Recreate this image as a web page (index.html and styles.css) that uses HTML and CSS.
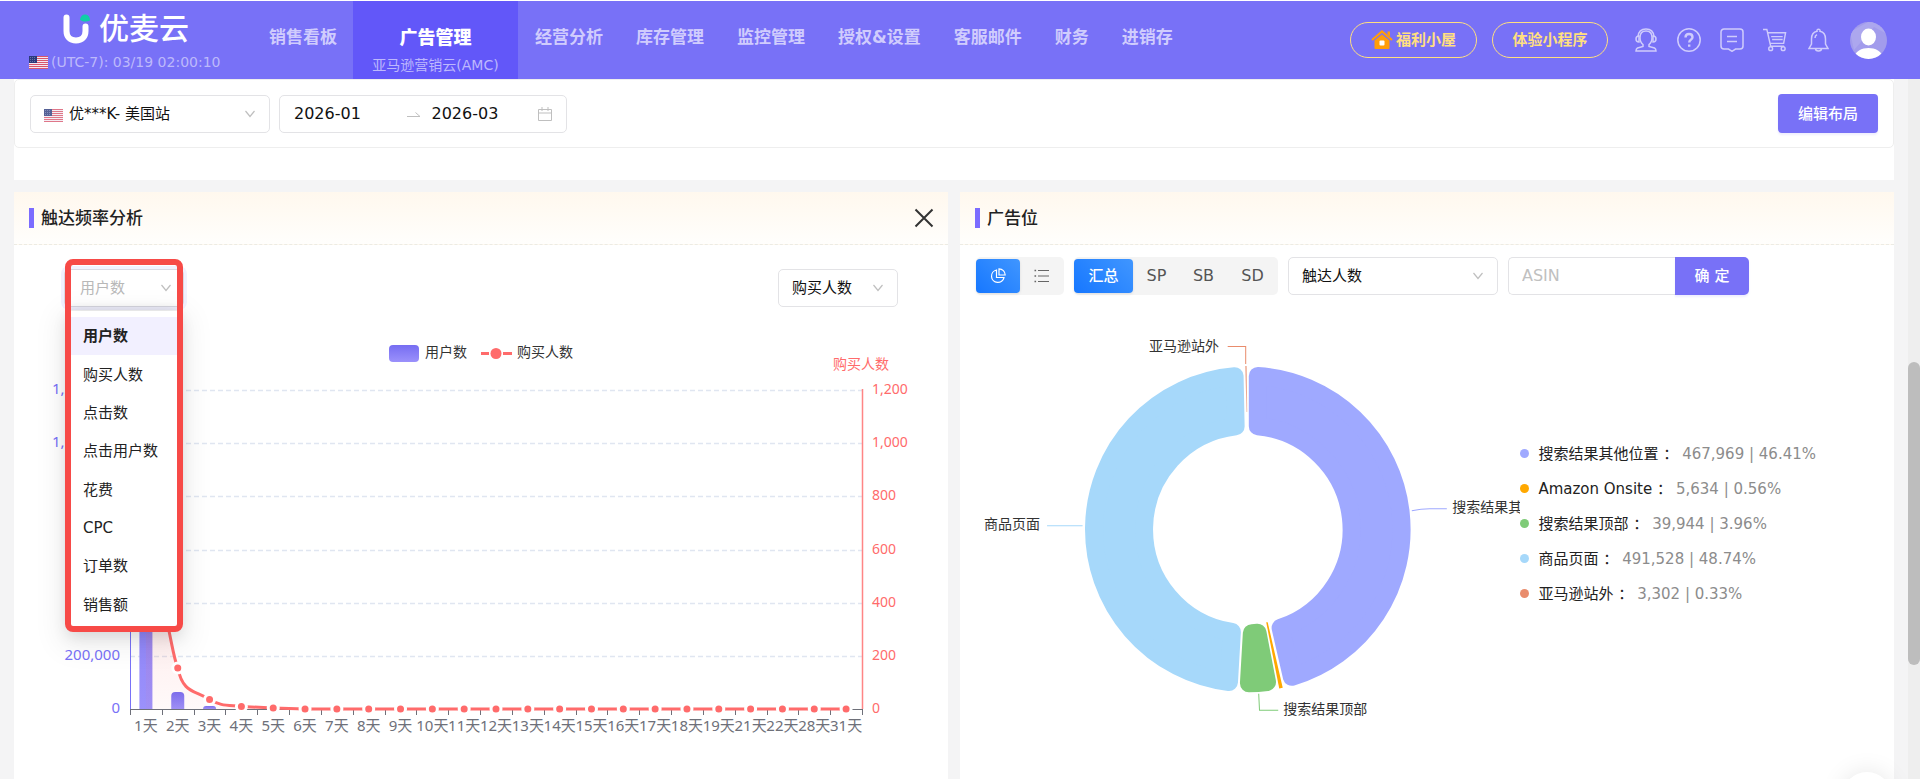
FILE: index.html
```html
<!DOCTYPE html>
<html lang="zh-CN">
<head>
<meta charset="utf-8">
<title>优麦云 - 亚马逊营销云(AMC)</title>
<link rel="stylesheet" href="styles.css">
</head>
<body>
<svg class="defs" width="0" height="0" aria-hidden="true">
  <symbol id="flag" viewBox="0 0 19 13">
    <rect width="19" height="13" fill="#f3e9f2"/>
    <path d="M0 .5h19M0 2.5h19M0 4.5h19M0 6.5h19M0 8.5h19M0 10.500h19M0 12.500h19" stroke="#d8566c"/>
    <rect width="8" height="7" fill="#2b3a7c"/>
    <path d="M1 1.500h6M1 3.500h6M1 5.500h6" stroke="#8f9ac6" stroke-width=".6" stroke-dasharray="1 1"/>
  </symbol>
  <symbol id="chevron" viewBox="0 0 12 8"><path d="M1.500 1 6 6.500 10.500 1" fill="none" stroke="#bfbfbf" stroke-width="1.200"/></symbol>
</svg>

<header class="topbar">
  <div class="brand">
    <a class="logo" href="#">
      <svg width="30" height="32" viewBox="0 0 30 32" aria-hidden="true">
        <path d="M4.500 4.500V18c0 6 3.500 9.500 9.500 9.500s9.500-3.500 9.500-9.500v-4.500" fill="none" stroke="#fff" stroke-width="6" stroke-linecap="round"/>
        <path d="M18 6.500C18.500 3 21 1 24 1.500c2.500.5 4 2.500 4 6-3 1.500-8 1.500-10-1z" fill="#0fcfa8"/>
      </svg>
      <span>优麦云</span>
    </a>
    <div class="clock"><svg width="19" height="13" aria-hidden="true"><use href="#flag"/></svg><span>(UTC-7): 03/19 02:00:10</span></div>
  </div>
  <nav class="nav">
    <a href="#">销售看板</a>
    <a href="#" class="active"><b>广告管理</b><small>亚马逊营销云(AMC)</small></a>
    <a href="#">经营分析</a>
    <a href="#">库存管理</a>
    <a href="#">监控管理</a>
    <a href="#">授权&amp;设置</a>
    <a href="#">客服邮件</a>
    <a href="#">财务</a>
    <a href="#">进销存</a>
  </nav>
  <div class="tools">
    <button class="pill pill-home" type="button">
      <svg width="22" height="20" viewBox="0 0 22 20" aria-hidden="true"><path d="M3.500 10.500 11 4.500l7.500 6V18a1 1 0 0 1-1 1h-13a1 1 0 0 1-1-1z" fill="#ff9d0a"/><path d="M1 10 11 1.500 21 10" fill="none" stroke="#ff9d0a" stroke-width="2.200"/><path d="M16.500 1.500h2.500v5l-2.500-2z" fill="#ff9d0a"/><rect x="8.500" y="10.500" width="5" height="5" rx="1" fill="#fff"/></svg>
      福利小屋</button>
    <button class="pill pill-mini" type="button">体验小程序</button>
    <div class="icons">
      <button type="button" aria-label="客服"><svg width="22" height="24" viewBox="0 0 22 24"><path d="M8 16.500C6 15 5 12.500 5 9.500 5 5 7.500 3 11 3s6 2 6 6.500c0 3-1 5.500-3 7v2l5.500 1.500c1 .5 1.500 1.500 1.500 3H1c0-1.500.5-2.500 1.500-3L8 18.500z"/><path d="M3 8.500C3.500 3.500 6.500 1 11 1s7.500 2.500 8 7.500M4 8c-2 0-3 1.200-3 3s1 3 3 3zM18 8c2 0 3 1.200 3 3s-1 3-3 3z"/></svg></button>
      <button type="button" aria-label="帮助"><svg width="24" height="24" viewBox="0 0 24 24"><circle cx="12" cy="12" r="11.200"/><path d="M8.500 9.500C8.500 7 10 6 12 6s3.500 1.200 3.500 3.200c0 2.300-3.300 2.600-3.300 5.300M12.200 16.500v2.300" stroke-width="2.400"/></svg></button>
      <button type="button" aria-label="消息"><svg width="24" height="24" viewBox="0 0 24 24"><path d="M4 1h16a3 3 0 0 1 3 3v14a3 3 0 0 1-3 3h-4.500L12 23.300 8.500 21H4a3 3 0 0 1-3-3V4a3 3 0 0 1 3-3zM7 8.500h10M7 13.500h10"/></svg></button>
      <button type="button" aria-label="购物车"><svg width="24" height="24" viewBox="0 0 25 24"><path d="M0 1h4l4 17.500h14M5 4.500h18.500l-2 11H7.500M8.500 8.500h12M9.500 11.500h11"/><circle cx="8" cy="21" r="2"/><circle cx="21" cy="21" r="2"/></svg></button>
      <button type="button" aria-label="通知"><svg width="21" height="24" viewBox="0 0 21 24"><path d="M9 3.300a1.600 1.600 0 1 1 3 0C15.500 4 17.500 7 17.500 11v5l2.500 4.500H1L3.500 16v-5C3.500 7 5.500 4 9 3.300zM7.500 20.500c0 3.300 6 3.300 6 0M7 10c0-1.500.8-2.700 2-3.300"/></svg></button>
    </div>
    <a class="avatar" href="#" aria-label="个人中心"><svg width="37" height="37" viewBox="0 0 37 37"><defs><clipPath id="av"><circle cx="18.500" cy="18.500" r="18.500"/></clipPath></defs><g clip-path="url(#av)"><rect width="37" height="37" fill="#a29cec"/><path d="M0 10 18 0h19v12L24 5 4 28z" fill="#aca7ee"/><ellipse cx="18.500" cy="15" rx="7.500" ry="8.500" fill="#fff"/><path d="M3 37c2-8 9-11 15.500-11S32 29 34 37z" fill="#fff"/></g></svg></a>
  </div>
</header>

<div class="viewport">
  <main class="content">
    <section class="filters">
      <div class="filter-row">
        <div class="field shop">
          <svg class="shop-flag" width="19" height="13" aria-hidden="true"><use href="#flag"/></svg>
          <select aria-label="店铺"><option>优***K- 美国站</option></select>
          <svg class="chev" width="12" height="8" aria-hidden="true"><use href="#chevron"/></svg>
        </div>
        <div class="range">
          <input type="text" value="2026-01" aria-label="开始月份">
          <svg class="arrow" width="14" height="6" viewBox="0 0 14 6" aria-hidden="true"><path d="M0 5.500h13L8.500 1.500" fill="none" stroke="#bfbfbf"/></svg>
          <input type="text" value="2026-03" aria-label="结束月份">
          <svg width="14" height="14" viewBox="0 0 14 14" aria-hidden="true"><path d="M.5 2.500h13v11H.5zM.5 6h13M4 0v4M10 0v4" fill="none" stroke="#bfbfbf"/></svg>
        </div>
        <button class="primary edit" type="button">编辑布局</button>
      </div>
    </section>

    <div class="cards">
      <section class="card">
        <div class="card-head"><h2>触达频率分析</h2>
          <button class="close" type="button" aria-label="关闭"><svg width="20" height="20" viewBox="0 0 20 20"><path d="M1.500 1.500l17 17M18.500 1.500l-17 17" stroke="#333" stroke-width="2"/></svg></button>
        </div>
        <div class="metric-row">
          <div class="metric-open">
            <div class="field metric focused">
              <select aria-label="左轴指标"><option>用户数</option></select>
              <svg class="chev" width="12" height="8" aria-hidden="true"><use href="#chevron"/></svg>
            </div>
            <ul class="menu" role="listbox" aria-label="左轴指标选项">
              <li role="option" aria-selected="true" class="on">用户数</li>
              <li role="option">购买人数</li>
              <li role="option">点击数</li>
              <li role="option">点击用户数</li>
              <li role="option">花费</li>
              <li role="option">CPC</li>
              <li role="option">订单数</li>
              <li role="option">销售额</li>
            </ul>
            <div class="marker"></div>
          </div>
          <div class="field metric">
            <select aria-label="右轴指标"><option>购买人数</option></select>
            <svg class="chev" width="12" height="8" aria-hidden="true"><use href="#chevron"/></svg>
          </div>
        </div>
        <svg class="chart" id="freq" viewBox="14 307 934 472" role="img" aria-label="触达频率分析图">
          <defs>
            <linearGradient id="bar" x1="0" y1="0" x2="0" y2="1"><stop offset="0" stop-color="#766df2"/><stop offset="1" stop-color="#9b91fb"/></linearGradient>
            <linearGradient id="area" x1="0" y1="0" x2="0" y2="1"><stop offset="0" stop-color="#ff6b6b" stop-opacity=".3"/><stop offset="1" stop-color="#ff6b6b" stop-opacity=".04"/></linearGradient>
          </defs>
          <rect x="389" y="345" width="30" height="17" rx="4" fill="url(#bar)"/>
          <text class="t-legend" x="425" y="357">用户数</text>
          <path d="M481 353.500h8M503 353.500h9" stroke="#ff6b6b" stroke-width="3"/>
          <circle cx="496" cy="353.500" r="5.500" fill="#ff6b6b"/>
          <text class="t-legend" x="517" y="357">购买人数</text>
          <text class="t-red" x="833" y="369">购买人数</text>
          <g id="freq-grid"></g>
        </svg>
      </section>

      <section class="card">
        <div class="card-head"><h2>广告位</h2></div>
        <div class="place-row">
          <div class="seg">
            <button class="on ico" type="button" aria-label="饼图"><svg width="16" height="16" viewBox="0 0 16 16"><path d="M6.500 2a6.300 6.300 0 1 0 7.500 7.500H6.500zM9 .8V7h6.200A6.200 6.200 0 0 0 9 .8z" fill="none" stroke="#fff" stroke-width="1.200"/></svg></button>
            <button class="ico" type="button" aria-label="列表"><svg width="16" height="14" viewBox="0 0 16 14"><path d="M4 1.500h11M4 7h11M4 12.500h11" stroke="#666" stroke-width="1.200"/><path d="M.5 1.500h1.600M.5 7h1.600M.5 12.500h1.600" stroke="#666" stroke-width="1.600"/></svg></button>
          </div>
          <div class="seg">
            <button class="on all" type="button">汇总</button><button type="button">SP</button><button type="button">SB</button><button type="button">SD</button>
          </div>
          <div class="field reach">
            <select aria-label="统计指标"><option>触达人数</option></select>
            <svg class="chev" width="12" height="8" aria-hidden="true"><use href="#chevron"/></svg>
          </div>
          <form class="search"><input type="text" placeholder="ASIN" aria-label="ASIN"><button class="primary" type="button">确 定</button></form>
        </div>
        <div class="pie-row">
          <svg class="pie" viewBox="960 295 560 484" role="img" aria-label="广告位占比">
            <g id="slices"></g>
            <path d="M1266 622h1.500l15 65.500-3.500.8z" fill="#ffa800"/>
            <path d="M1245 366h1.500l.5 46h-.6z" fill="#eda890"/>
            <g fill="none">
              <path d="M1227.500 346.500h18V364" stroke="#e98c6c"/>
              <path d="M1047 525.500h35.500" stroke="#a6d8fa"/>
              <path d="M1258.500 693.500l.8 16.500H1278" stroke="#7fcb78"/>
              <path d="M1411.500 510.500q9-2 18-2h17" stroke="#9fa9ff"/>
            </g>
            <g class="t-pie">
              <text x="1149" y="351">亚马逊站外</text>
              <text x="984" y="529">商品页面</text>
              <text x="1283" y="714">搜索结果顶部</text>
              <text x="1452" y="512">搜索结果其他位置</text>
            </g>
          </svg>
          <ul class="legend">
            <li><i class="c1"></i>搜索结果其他位置 ：<em>467,969 | 46.41%</em></li>
            <li><i class="c2"></i>Amazon Onsite ：<em>5,634 | 0.56%</em></li>
            <li><i class="c3"></i>搜索结果顶部 ：<em>39,944 | 3.96%</em></li>
            <li><i class="c4"></i>商品页面 ：<em>491,528 | 48.74%</em></li>
            <li><i class="c5"></i>亚马逊站外 ：<em>3,302 | 0.33%</em></li>
          </ul>
        </div>
      </section>
    </div>
  </main>
  <div class="scroll"><div class="thumb"></div></div>
  <svg class="watermark" id="watermark" aria-hidden="true"></svg>
</div>
<div class="float"></div>
<script src="app.js"></script>
</body>
</html>
```
FILE: styles.css
```css
* { box-sizing: border-box; }
body {
  margin: 0;
  height: 100vh;
  overflow: hidden;
  display: flex;
  flex-direction: column;
  background: #f4f4f5;
  color: #222;
  font: 15px/20px "DejaVu Sans", "Noto Sans CJK SC", sans-serif;
}
button, input, select { font: inherit; color: inherit; margin: 0; }
button { border: 0; background: none; padding: 0; cursor: pointer; }
a { color: inherit; text-decoration: none; }
ul { list-style: none; margin: 0; padding: 0; }
svg { display: block; flex: none; }
.defs { position: absolute; }

/* top bar */
.topbar {
  flex: none;
  height: 79px;
  border-top: 1px solid #fff;
  background: #7871f7;
  display: flex;
}
.brand { width: 253px; flex: none; padding: 12px 0 0 29px; }
.logo { display: flex; gap: 7px; padding-left: 33px; height: 32px; align-items: center; color: #fff; font-size: 30px; line-height: 32px; font-weight: 500; }
.clock { display: flex; align-items: center; gap: 3px; margin-top: 7px; font-size: 14px; color: #bdb9fb; white-space: nowrap; }
.nav { display: flex; flex: none; }
.nav a { padding: 26px 16px 0; font-size: 17px; font-weight: 700; color: #d0ccfd; white-space: nowrap; }
.nav .active { background: #6257f9; color: #fff; width: 165px; display: flex; flex-direction: column; align-items: center; gap: 7px; }
.nav .active ~ a { margin-left: 1px; }
.nav .active b { font-size: 18px; line-height: 22px; }
.nav .active small { font-size: 14px; line-height: 18px; font-weight: 400; color: #bdb8fd; }
.tools { margin-left: auto; display: flex; align-items: center; padding-right: 33px; }
.pill { height: 36px; border: 1px solid #ffdf80; border-radius: 18px; color: #ffdf80; font-weight: 700; display: flex; align-items: center; justify-content: center; gap: 3px; white-space: nowrap; }
.pill-home { width: 127px; }
.pill-mini { width: 116px; margin-left: 15px; }
.icons { display: flex; align-items: center; gap: 19px; padding: 0 20px 0 26px; }
.icons button { width: 24px; display: flex; justify-content: center; }
.icons svg { fill: none; stroke: #cfccfc; stroke-width: 1.5; }

/* scroll area */
.viewport { flex: 1; min-height: 0; display: flex; position: relative; overflow: hidden; }
.content { flex: 1; min-width: 0; padding: 0 14px; display: flex; flex-direction: column; gap: 12px; }
.scroll { width: 12px; flex: none; background: #eee; padding-top: 283px; }
.thumb { height: 303px; border-radius: 6px; background: #bdbdbd; }
.watermark { position: absolute; inset: 0; width: 100%; height: 100%; pointer-events: none; fill: #000; fill-opacity: .014; font: 15px "DejaVu Sans", sans-serif; }
.float { position: fixed; right: 28px; bottom: -43px; width: 50px; height: 50px; border-radius: 25px; background: #fff; box-shadow: 0 0 24px rgba(0, 0, 0, .1); }

/* filters */
.filters { flex: none; background: #fff; padding-bottom: 32px; }
.filter-row { display: flex; align-items: center; gap: 9px; height: 69px; padding: 0 15px; border: 1px solid #eee; border-radius: 5px; }
.field { position: relative; height: 38px; }
.field select { appearance: none; width: 100%; height: 100%; padding: 0 30px 0 13px; border: 1px solid #e3e3e6; border-radius: 5px; background: #fff; color: #111; }
.field .chev { position: absolute; right: 14px; top: 15px; pointer-events: none; }
.shop { width: 240px; }
.shop select { padding-left: 38px; }
.shop-flag { position: absolute; left: 14px; top: 14px; opacity: .8; }
.range { display: flex; align-items: center; width: 288px; height: 38px; padding: 0 14px; border: 1px solid #e3e3e6; border-radius: 5px; background: #fff; }
.range input { width: 107px; min-width: 0; padding: 0; border: 0; outline: 0; background: none; font-size: 16px; color: #111; }
.range .arrow { margin: 0 11px 0 6px; }
.primary { background: #7871f7; color: #fff; font-weight: 500; box-shadow: 0 2px 2px rgba(120, 113, 247, .12); }
.edit { margin-left: auto; width: 100px; height: 39px; border-radius: 4px; }

/* cards */
.cards { flex: 1; min-height: 0; display: grid; grid-template-columns: 1fr 1fr; gap: 12px; }
.card { background: #fff; min-width: 0; }
.card-head { height: 53px; padding: 0 14px 0 15px; display: flex; align-items: center; justify-content: space-between; background: linear-gradient(#fff8ee, #fffefc); border-bottom: 1px dashed #ecebe4; }
.card-head h2 { margin: 0; padding-left: 7px; border-left: 5px solid #7b6cff; font-size: 17px; line-height: 20px; font-weight: 500; }
.metric-row { display: flex; justify-content: space-between; padding: 24px 50px 0; }
.metric-open { position: relative; }
.metric { width: 120px; }
.focused select { padding-left: 15px; color: #b8b8b8; box-shadow: 0 0 0 3px rgba(120, 113, 247, .1); border-color: #d9d9e3; }
.focused .chev { right: 12px; }
.menu {
  position: absolute;
  top: 42px;
  left: 4px;
  width: 112px;
  height: 319px;
  padding: 6px 0;
  display: grid;
  grid-auto-rows: 1fr;
  background: #fff;
  border-radius: 4px;
  box-shadow: 0 -4px 10px rgba(0, 0, 0, .06), 0 6px 16px rgba(0, 0, 0, .12), 0 9px 28px 10px rgba(0, 0, 0, .06);
}
.menu li { display: flex; align-items: center; padding-left: 15px; }
.menu .on { background: #f2f0ff; font-weight: 700; }
.marker { position: absolute; top: -10px; left: 1px; width: 118px; height: 373px; border: 6px solid #f74a47; border-radius: 8px; }
.chart { width: 100%; height: auto; }
.chart text { font: 14px "Noto Sans", "Noto Sans CJK SC", sans-serif; }
.chart .t-legend { fill: #333; }
.chart .t-red { fill: #ff6b6b; }
.chart .t-left { fill: #7871f7; text-anchor: end; font-size: 15px; }
.chart .t-day { fill: #6e7079; text-anchor: middle; font-size: 15px; }

.place-row { display: flex; gap: 10px; padding: 12px 16px 0; }
.seg { display: flex; align-items: center; height: 38px; border-radius: 5px; background: #f4f4f4; }
.seg button { width: 47px; height: 34px; border-radius: 4px; font-size: 16px; color: #555; display: flex; align-items: center; justify-content: center; }
.seg .ico { width: 44px; }
.seg .all { width: 59px; }
.seg + .seg button:last-child { width: 51px; }
.seg .on { background: linear-gradient(45deg, #1677ff, #4096ff); color: #fff; font-size: 15px; font-weight: 500; box-shadow: 0 1px 3px rgba(0, 0, 0, .1); }
.reach { width: 210px; }
.search { display: flex; height: 38px; }
.search input { width: 167px; padding: 0 13px; border: 1px solid #e3e3e6; border-right: 0; border-radius: 5px 0 0 5px; font-size: 16px; outline: 0; }
.search input::placeholder { color: #c0c0c0; opacity: 1; }
.search button { width: 74px; border-radius: 0 5px 5px 0; }
.pie-row { display: grid; grid-template-columns: 3fr 2fr; align-items: start; }
.pie { width: 100%; height: auto; overflow: hidden; }
.pie text { font: 14px "Noto Sans", "Noto Sans CJK SC", sans-serif; fill: #333; }
.legend { padding-top: 141px; }
.legend li { display: flex; align-items: center; height: 35px; white-space: pre; }
.legend i { width: 9px; height: 9px; border-radius: 5px; margin-right: 9px; }
.legend em { font-style: normal; color: #8c8c8c; margin-left: 4px; }
.c1 { background: #9fa9ff; }
.c2 { background: #ffa800; }
.c3 { background: #7fcb78; }
.c4 { background: #a6d8fa; }
.c5 { background: #e98c6c; }
```
FILE: app.js
```js
// Frequency chart: grid, axes, bars and line
const days = [1,2,3,4,5,6,7,8,9,10,11,12,13,14,15,16,17,18,19,21,22,28,31];
const L = 130, R = 862, B = 709, T = 390, step = (R - L) / days.length;
const leftLabels = { 0: '0', 1: '200,000', 5: '1,000,000', 6: '1,200,000' };
let g = '';
for (let i = 0; i <= 6; i++) {
  const y = Math.round(B - (B - T) * i / 6) + 0.5;
  if (i) g += `<path d="M${L} ${y}H${R}" stroke="#e0e6f1" stroke-width="1.500" stroke-dasharray="5 3"/>`;
  if (leftLabels[i]) g += `<text class="t-left" x="120" y="${y + 3.5}">${leftLabels[i]}</text>`;
  g += `<text class="t-red" x="872" y="${y + 3.5}">${(i * 200).toLocaleString('en-US')}</text>`;
}
g += `<path d="M${L} ${B + .5}H${R}" stroke="#6e7079"/>`;
for (let i = 0; i <= days.length; i++) g += `<path d="M${Math.round(L + i * step) + .5} ${B}v6" stroke="#6e7079"/>`;
g += `<path d="M130.500 ${T}V${B}" stroke="#7871f7"/><path d="M862.500 ${T - 1}V${B}" stroke="#ff8585" stroke-width="1.500"/>`;
[[0, 420], [1, 692], [2, 706]].forEach(([i, y]) => {
  const x = L + (i + .5) * step - 6.5, r = Math.min(4, B - y);
  g += `<path d="M${x} ${B}V${y + r}q0-${r} ${r}-${r}h${13 - 2 * r}q${r} 0 ${r} ${r}V${B}z" fill="url(#bar)"/>`;
});
const xs = days.map((d, i) => L + (i + .5) * step);
const ys = days.map((d, i) => [430, 668, 699.5, 706.5, 708, 709][i] || 709);
let line = `M${xs[0]} ${ys[0]}C150 500 164 610 169 631C173 650 174 658 ${xs[1]} 668C183 693 194 690 ${xs[2]} 699.5C221 706 226 705 ${xs[3]} 706.5`;
for (let i = 4; i < xs.length; i++) line += `L${xs[i]} ${ys[i]}`;
g += `<path d="${line}V${B}H${xs[0]}z" fill="url(#area)"/>`;
g += `<path d="${line}" fill="none" stroke="#ff6b6b" stroke-width="3"/>`;
xs.forEach((x, i) => {
  g += `<circle cx="${x}" cy="${ys[i]}" r="5" fill="#ff6b6b" stroke="#fff" stroke-width="3"/>`;
  g += `<text class="t-day" x="${x}" y="731">${days[i]}天</text>`;
});
document.getElementById('freq-grid').innerHTML = g;

// Doughnut slices with rounded corners
const cx = 1247.6, cy = 529.3, c = 9, pad = 1;
const pt = (r, a) => `${(cx + r * Math.sin(a)).toFixed(2)} ${(cy - r * Math.cos(a)).toFixed(2)}`;
const slice = (from, to, color, k) => {
  const ro = 162.7 - k, ri = 94.7 + k, d = k + pad;
  const a0 = from * Math.PI / 180, a1 = to * Math.PI / 180;
  const o0 = a0 + Math.asin(d / ro), o1 = a1 - Math.asin(d / ro);
  const i0 = a0 + Math.asin(d / ri), i1 = a1 - Math.asin(d / ri);
  const big = to - from > 180 ? 1 : 0;
  return `<path d="M${pt(ro, o0)}A${ro} ${ro} 0 ${big} 1 ${pt(ro, o1)}L${pt(ri, i1)}A${ri} ${ri} 0 ${big} 0 ${pt(ri, i0)}z" fill="${color}" stroke="${color}" stroke-width="${2 * k}" stroke-linejoin="round"/>`;
};
document.getElementById('slices').innerHTML =
  slice(0, 167.1, '#9fa9ff', c) + slice(169.1, 183.3, '#7fcb78', c) + slice(183.3, 358.8, '#a6d8fa', c);

// Account watermark
const mark = document.getElementById('watermark');
const { width, height } = mark.getBoundingClientRect();
let w = '';
for (let col = 0; col * 87 < width; col++) {
  const x = 2 + col * 87;
  const base = (col % 2 ? 66 : 31) - Math.floor(col / 2) * 5;
  for (let y = base % 65; y < height + 20; y += 65) {
    if (y > 24) w += `<text x="${x}" y="${y}" transform="rotate(-25 ${x} ${y})">17185</text>`;
  }
}
mark.innerHTML = w;
```
